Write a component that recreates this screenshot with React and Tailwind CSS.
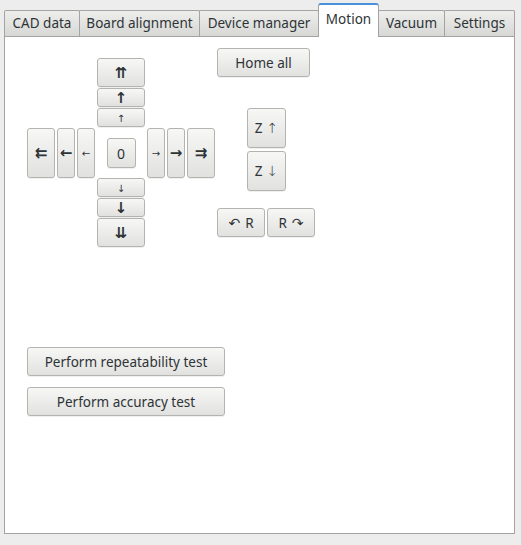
const btn =
  'flex items-center justify-center rounded-[3px] border border-[#b3b3b0] bg-gradient-to-b from-[#f7f7f6] to-[#e1e1df] pt-px text-[#2e3436] shadow-[0_1px_0_rgba(0,0,0,0.06)]';

const arrowFont = { fontFamily: '"DejaVu Sans", sans-serif' };

function Btn({ className = '', children, arrow }) {
  return (
    <div className={`${btn} ${className}`} style={arrow ? arrowFont : undefined}>
      {children}
    </div>
  );
}

const tabs = [
  { label: 'CAD data', w: 'w-[76px]' },
  { label: 'Board alignment', w: 'w-[121px]' },
  { label: 'Device manager', w: 'w-[120px]' },
  { label: 'Motion', w: 'w-[61px]', active: true },
  { label: 'Vacuum', w: 'w-[67px]' },
  { label: 'Settings', w: 'w-[71px]' },
];

function Tabs() {
  return (
    <div className="flex h-[36px] items-end pl-[4px]">
      {tabs.map((t, i) =>
        t.active ? (
          <div
            key={t.label}
            className={`${t.w} relative z-10 -mb-px -ml-px flex h-[34px] items-center justify-center rounded-t-[3px] border border-b-0 border-[#a3a3a3] border-t-2 border-t-[#4a90d9] bg-white pb-[4px] text-[#2e3436]`}
          >
            {t.label}
          </div>
        ) : (
          <div
            key={t.label}
            className={`${t.w} ${i > 0 ? '-ml-px' : ''} flex h-[26px] items-center justify-center rounded-t-[2px] border border-b-0 border-[#a3a3a3] bg-gradient-to-b from-[#eeeeed] to-[#d7d7d5] pb-px text-[#2e3436]`}
          >
            {t.label}
          </div>
        )
      )}
    </div>
  );
}

function Pad() {
  return (
    <div className="mt-[10px] flex items-start gap-[2px]">
      <div className="mt-[70px] flex gap-[2px]">
        <Btn arrow className="h-[50px] w-[28px] text-[15px] font-bold">⇇</Btn>
        <Btn arrow className="h-[50px] w-[18px] text-[15px] font-bold">←</Btn>
        <Btn arrow className="h-[50px] w-[18px] text-[10px]">←</Btn>
      </div>
      <div className="flex w-[48px] flex-col gap-px">
        <Btn arrow className="h-[29px] text-[15px] font-bold">⇈</Btn>
        <Btn arrow className="h-[19px] text-[15px] font-bold">↑</Btn>
        <Btn arrow className="h-[19px] text-[10px]">↑</Btn>
        <div className="flex h-[49px] items-center justify-center">
          <Btn className="h-[30px] w-[29px] text-[14px]">0</Btn>
        </div>
        <Btn arrow className="h-[19px] text-[10px]">↓</Btn>
        <Btn arrow className="h-[19px] text-[15px] font-bold">↓</Btn>
        <Btn arrow className="h-[29px] text-[15px] font-bold">⇊</Btn>
      </div>
      <div className="mt-[70px] flex gap-[2px]">
        <Btn arrow className="h-[50px] w-[18px] text-[10px]">→</Btn>
        <Btn arrow className="h-[50px] w-[18px] text-[15px] font-bold">→</Btn>
        <Btn arrow className="h-[50px] w-[28px] text-[15px] font-bold">⇉</Btn>
      </div>
    </div>
  );
}

function Side() {
  return (
    <div className="flex w-[98px] flex-col">
      <Btn className="h-[29px] w-[93px]">Home all</Btn>
      <div className="ml-[30px] mt-[31px] flex flex-col gap-[3px]">
        <Btn className="h-[40px] w-[39px] gap-[4px]">
          Z <span style={arrowFont} className="text-[14px] font-light text-[#2e3436]">↑</span>
        </Btn>
        <Btn className="h-[40px] w-[39px] gap-[4px]">
          Z <span style={arrowFont} className="text-[14px] font-light text-[#2e3436]">↓</span>
        </Btn>
      </div>
      <div className="mt-[17px] flex gap-[2px]">
        <Btn className="h-[29px] w-[48px] gap-[5px]">
          <span style={arrowFont} className="text-[14px]">↶</span> R
        </Btn>
        <Btn className="h-[29px] w-[48px] gap-[5px]">
          R <span style={arrowFont} className="text-[14px]">↷</span>
        </Btn>
      </div>
    </div>
  );
}

export default function App() {
  return (
    <div
      className="h-[545px] w-[522px] overflow-hidden border-r border-[#d4d4d4] bg-[#ededed] text-[13.5px] text-[#2e3436]"
      style={{ fontFamily: '"Noto Sans", "Open Sans", sans-serif' }}
    >
      <Tabs />
      <div className="ml-[4px] h-[498px] w-[511px] border border-[#a3a3a3] bg-white pl-[22px] pt-[11px]">
        <div className="flex items-start gap-[2px]">
          <Pad />
          <Side />
        </div>
        <div className="mt-[100px] flex flex-col gap-[11px]">
          <Btn className="h-[29px] w-[198px]">Perform repeatability test</Btn>
          <Btn className="h-[29px] w-[198px]">Perform accuracy test</Btn>
        </div>
      </div>
    </div>
  );
}
